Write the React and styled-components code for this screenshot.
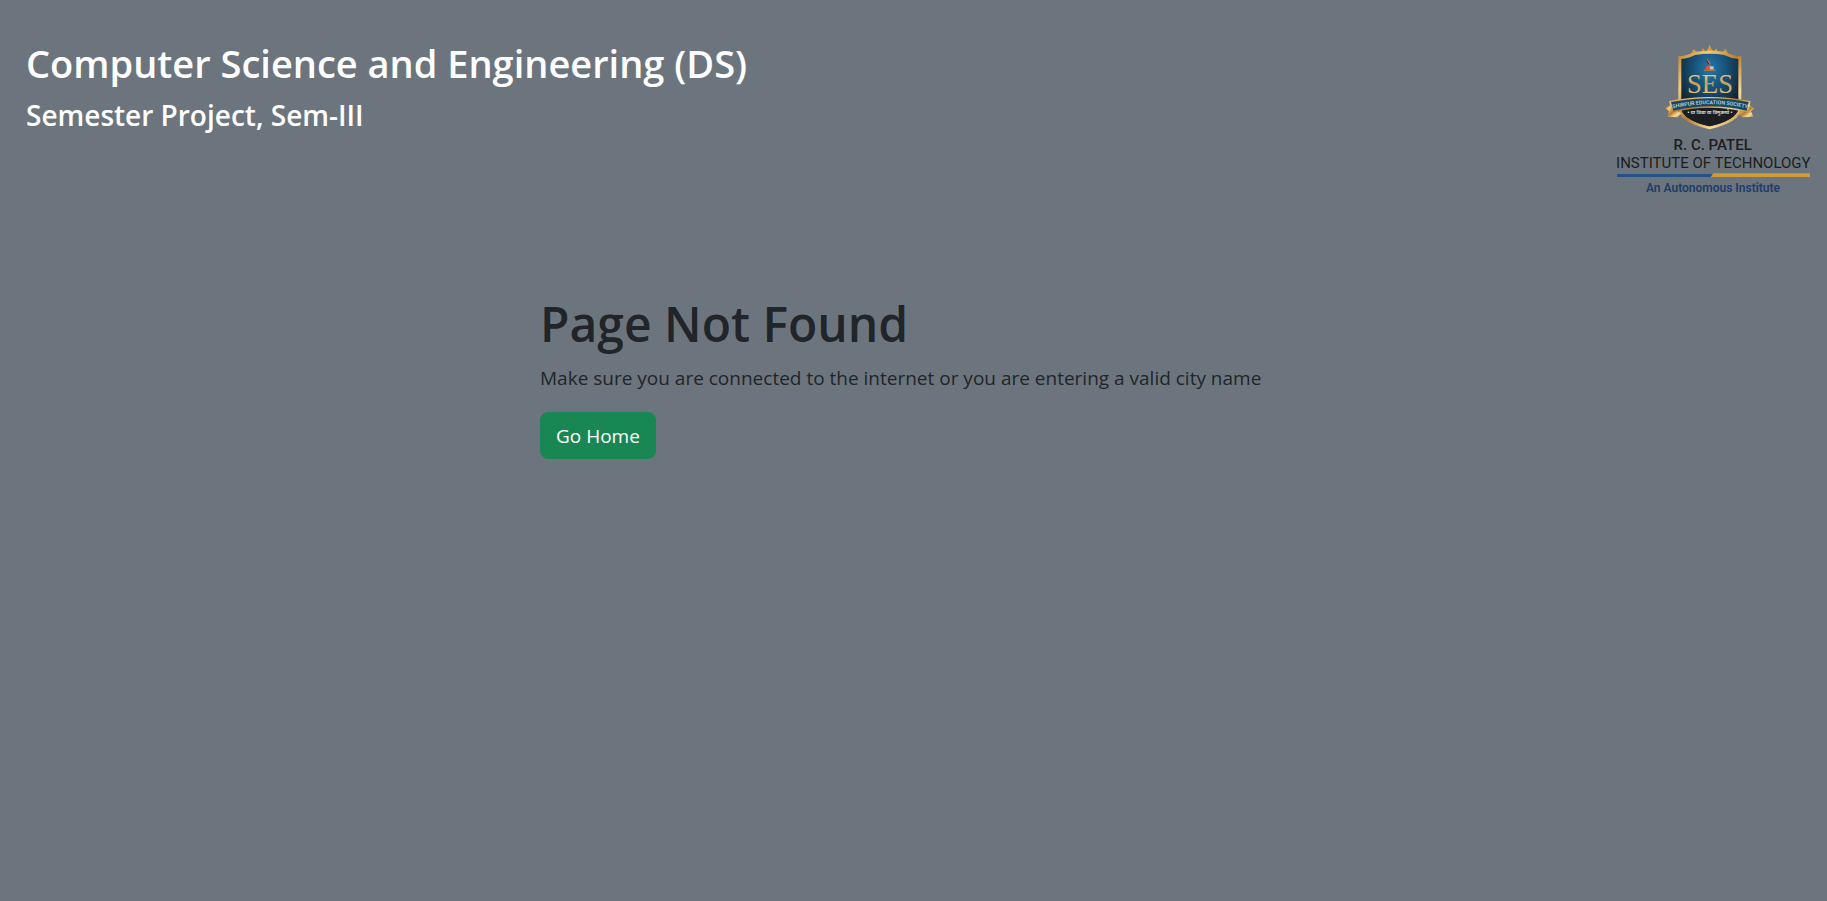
import React from "react";
import styled, { createGlobalStyle } from "styled-components";

const GlobalStyle = createGlobalStyle`
  *, *::before, *::after { box-sizing: border-box; }
  body {
    margin: 0;
    min-height: 100vh;
    background: #6c757d;
    color: #212529;
    font-family: "Segoe UI", "Open Sans", "Noto Sans", sans-serif;
    font-size: 19px;
    line-height: 30px;
  }
`;

const Header = styled.header`
  display: flex;
  justify-content: space-between;
  align-items: flex-start;
  padding: 40px 15px 0 26px;
`;

const Titles = styled.div`
  color: #fff;
`;

const Department = styled.h2`
  margin: 0 0 11px;
  font-size: 38px;
  font-weight: 600;
  line-height: 46px;
`;

const Project = styled.h4`
  margin: 0;
  font-size: 28px;
  font-weight: 600;
  line-height: 36px;
`;

const Logo = styled.svg`
  flex: none;
  width: 197px;
  height: 158px;
`;

const Message = styled.main`
  width: 747px;
  max-width: 100%;
  margin: 94px auto 0;
`;

const Heading = styled.h1`
  margin: 0 0 7px;
  font-size: 48px;
  font-weight: 600;
  line-height: 64px;
`;

const Text = styled.p`
  margin: 0 0 19px;
`;

const HomeButton = styled.button`
  height: 47px;
  padding: 0 15px;
  border: 1px solid #198754;
  border-radius: 8px;
  background: #198754;
  color: #fff;
  font: inherit;
  cursor: pointer;
`;

function InstituteLogo() {
  return (
    <Logo viewBox="45 30 591 474" role="img" aria-label="R. C. Patel Institute of Technology">
      <defs>
        <linearGradient id="gold" x1="0" y1="0" x2="1" y2="1">
          <stop offset="0" stopColor="#b9822f" />
          <stop offset="0.25" stopColor="#f0cb83" />
          <stop offset="0.5" stopColor="#b57c2c" />
          <stop offset="0.75" stopColor="#f6dca0" />
          <stop offset="1" stopColor="#b9822f" />
        </linearGradient>
        <radialGradient id="field" cx="0.5" cy="0.2" r="0.65">
          <stop offset="0" stopColor="#2478ae" />
          <stop offset="0.55" stopColor="#16486b" />
          <stop offset="1" stopColor="#151e27" />
        </radialGradient>
        <linearGradient id="letters" x1="0" y1="0" x2="0" y2="1">
          <stop offset="0" stopColor="#f7dfae" />
          <stop offset="0.5" stopColor="#c99c55" />
          <stop offset="1" stopColor="#f3d597" />
        </linearGradient>
        <path id="motto" d="M217 236 Q330 209 444 236" />
      </defs>
      <path
        d="M274 72 L281 57 L291 67 L306 66 L308 55 L317 64 Q326 58 329 42 Q332 58 341 64 L350 55 L352 66 L367 67 L377 57 L384 72 Z"
        fill="#d79c3e"
      />
      <path
        d="M235 79 Q260 78 281 66 Q330 59 377 66 Q398 78 424 79 V238 Q418 278 329 298 Q240 278 235 238 Z"
        fill="url(#gold)"
      />
      <path
        d="M244 87 Q266 86 285 75 Q330 68 373 75 Q393 86 415 87 V236 Q408 270 329 289 Q250 270 244 236 Z"
        fill="url(#field)"
      />
      <path d="M244 205 H415 V236 Q408 270 329 289 Q250 270 244 236 Z" fill="#1c1d20" />
      <path d="M316 86 Q334 90 331 108 L326 112 Q328 96 316 86 Z" fill="#d8604a" />
      <path d="M318 89 L328 104" stroke="#262c3d" strokeWidth="3" />
      <path d="M317 109 H327 V119 H317 Z" fill="#e84e39" />
      <path d="M329 109 H341 V119 H329 Z" fill="#c5c6bd" />
      <path d="M312 121 H347" stroke="#a8793e" strokeWidth="4" />
      <text x="330" y="188" textAnchor="middle" fontFamily="Liberation Serif, serif" fontSize="80" fill="url(#letters)">
        SES
      </text>
      <path d="M209 226 L197 235 L207 244 L201 260 L233 262 L244 250 L223 238 Z" fill="url(#gold)" />
      <path d="M450 226 L463 235 L453 244 L460 260 L427 262 L416 250 L437 238 Z" fill="url(#gold)" />
      <path d="M207 213 Q330 189 452 213 L444 247 Q330 219 216 247 Z" fill="url(#gold)" />
      <path d="M213 216 Q330 193 446 216 L440 242 Q330 215 220 242 Z" fill="#174766" />
      <text fontFamily="Roboto, sans-serif" fontSize="16" fontWeight="500" fill="#c6d8df">
        <textPath href="#motto" startOffset="50%" textAnchor="middle">
          SHIRPUR EDUCATION SOCIETY
        </textPath>
      </text>
      <text
        x="330"
        y="253"
        textAnchor="middle"
        fontFamily="Noto Sans Devanagari, Noto Sans, sans-serif"
        fontSize="15"
        fontWeight="600"
        fill="#e1e1df"
      >
        • या विद्या या विमुक्तये •
      </text>
      <g fontFamily="Roboto, sans-serif" fill="#1c1d20" textAnchor="middle">
        <text x="338" y="361" fontSize="45" fontWeight="500">R. C. PATEL</text>
        <text x="340" y="415" fontSize="45">INSTITUTE OF TECHNOLOGY</text>
      </g>
      <path d="M51 432 H337 L332 441 H51 Z" fill="#245487" />
      <path d="M340 430 H630 V441 H333 Z" fill="#cd9c37" />
      <text x="339" y="486" textAnchor="middle" fontFamily="Roboto, sans-serif" fontSize="36" fontWeight="600" fill="#203c69">
        An Autonomous Institute
      </text>
    </Logo>
  );
}

export default function App() {
  return (
    <>
      <GlobalStyle />
      <Header>
        <Titles>
          <Department>Computer Science and Engineering (DS)</Department>
          <Project>Semester Project, Sem-III</Project>
        </Titles>
        <InstituteLogo />
      </Header>
      <Message>
        <Heading>Page Not Found</Heading>
        <Text>Make sure you are connected to the internet or you are entering a valid city name</Text>
        <HomeButton type="button">Go Home</HomeButton>
      </Message>
    </>
  );
}
